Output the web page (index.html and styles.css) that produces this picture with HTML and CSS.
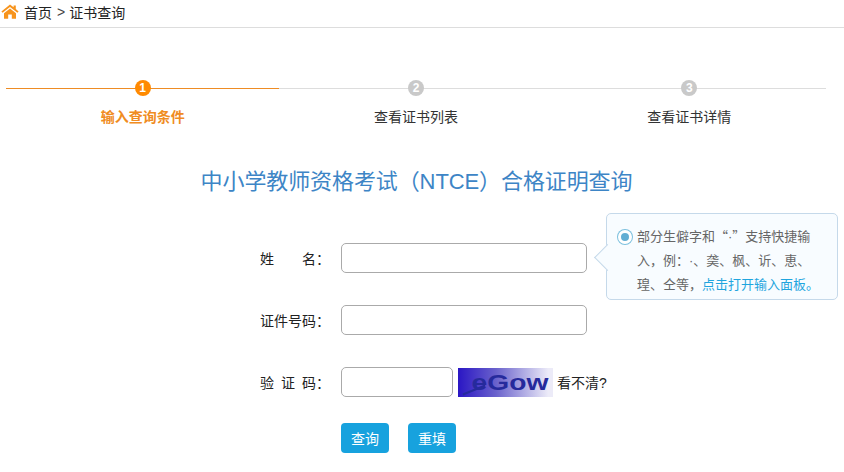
FILE: index.html
```html
<!DOCTYPE html>
<html lang="zh-CN">

<head>
  <meta charset="UTF-8">
  <title>证书查询</title>
  <link rel="stylesheet" href="styles.css">
</head>

<body>

  <div class="crumb">
    <svg class="home-icon" width="18" height="15" viewBox="0 0 18 15">
      <path fill="#f7941d" d="M9 0.4 L0.4 7.4 L1.6 8.8 L9 2.9 L16.4 8.8 L17.6 7.4 L14.8 5.1 L14.8 1.4 L12.6 1.4 L12.6 3.3 Z" />
      <path fill="#f7941d" d="M9 4.4 L3 9.2 L3 14.8 L7.2 14.8 L7.2 10.4 L10.8 10.4 L10.8 14.8 L15 14.8 L15 9.2 Z" />
    </svg>
    <span>首页</span>
    <span class="crumb-sep">&gt;</span>
    <span>证书查询</span>
  </div>

  <div class="steps">
    <div class="step active">
      <div class="step-num">1</div>
      <div class="step-name">输入查询条件</div>
    </div>
    <div class="step">
      <div class="step-num">2</div>
      <div class="step-name">查看证书列表</div>
    </div>
    <div class="step">
      <div class="step-num">3</div>
      <div class="step-name">查看证书详情</div>
    </div>
  </div>

  <h1 class="page-title">中小学教师资格考试（NTCE）合格证明查询</h1>

  <form class="query-form">
    <div class="form-row">
      <label class="form-label"><span>姓</span><span>名：</span></label>
      <input class="text-input" type="text">
      <div class="tip">
        <span class="tip-dot"></span>
        <p>部分生僻字和“<span class="mid-dot">·</span>”支持快捷输<br>入，例：<span class="mid-dot">·</span>、䶮、枫、䜣、恵、<br>瑝、仝等，<a href="#">点击打开输入面板。</a></p>
      </div>
    </div>
    <div class="form-row">
      <label class="form-label">证件号码：</label>
      <input class="text-input" type="text">
    </div>
    <div class="form-row">
      <label class="form-label"><span>验</span><span>证</span><span>码：</span></label>
      <input class="text-input short" type="text">
      <div class="captcha"><span>eGow</span></div>
      <a class="refresh" href="#">看不清?</a>
    </div>
    <div class="form-buttons">
      <button class="btn" type="button">查询</button>
      <button class="btn" type="button">重填</button>
    </div>
  </form>

</body>

</html>
```

FILE: styles.css
```css
body {
  margin: 0;
  background-color: #fff;
  color: #222;
  font-family: "Liberation Sans", "Noto Sans CJK SC", sans-serif;
  font-size: 14px;
}

.crumb {
  display: flex;
  align-items: center;
  gap: 5px;
  height: 23px;
  padding: 0 0 4px 1px;
  border-bottom: 1px solid #ddd;
  font-size: 14px;
}

.crumb-sep {
  margin-right: -1px;
  color: #444;
}

.steps {
  display: grid;
  grid-template-columns: repeat(3, 1fr);
  width: 820px;
  margin: 52px 0 0 6px;
}

.step {
  display: flex;
  flex-direction: column;
  align-items: center;
  background: linear-gradient(#ddd, #ddd) no-repeat 0 8px / 100% 1px;
}

.step-num {
  width: 16px;
  height: 16px;
  border-radius: 50%;
  background-color: #c9c9c9;
  color: #fff;
  font-size: 12px;
  font-weight: bold;
  line-height: 16px;
  text-align: center;
}

.step-name {
  margin-top: 11px;
  font-size: 14px;
  line-height: 20px;
  color: #333;
}

.step.active {
  background-image: linear-gradient(#ee8c24, #ee8c24);
}

.step.active .step-num {
  background-color: #ff8a00;
}

.step.active .step-name {
  color: #f08c22;
  font-weight: bold;
}

.page-title {
  margin: 39px 0 0;
  padding-right: 11px;
  color: #3d85c6;
  font-size: 22px;
  font-weight: normal;
  line-height: 32px;
  letter-spacing: -0.1px;
  text-align: center;
}

.query-form {
  margin: 45px 0 0 260px;
}

.form-row {
  position: relative;
  display: flex;
  align-items: center;
  height: 30px;
  margin-bottom: 32px;
}

.form-label {
  display: flex;
  justify-content: space-between;
  width: 70px;
  margin-right: 11px;
  font-size: 14px;
}

.text-input {
  width: 246px;
  height: 30px;
  box-sizing: border-box;
  border: 1px solid #aaa;
  border-radius: 5px;
  background-color: #fff;
}

.text-input.short {
  width: 112px;
}

.captcha {
  position: relative;
  display: flex;
  align-items: center;
  justify-content: center;
  width: 95px;
  height: 29px;
  margin-left: 5px;
  background: linear-gradient(90deg, #2a16c4, #6a62cc 40%, #ecebf8 95%);
  overflow: hidden;
}

.captcha::before {
  content: "";
  position: absolute;
  left: 4px;
  top: 21px;
  width: 24px;
  height: 2px;
  background-color: #262a9c;
  transform: rotate(-22deg);
}

.captcha span {
  margin-left: 8px;
  color: #262a9c;
  font-size: 22px;
  font-weight: bold;
  line-height: 29px;
  transform: scaleX(1.28);
}

.refresh {
  margin-left: 4px;
  color: #222;
  font-size: 14px;
  text-decoration: none;
}

.tip {
  position: absolute;
  left: 346px;
  top: -30px;
  width: 232px;
  height: 87px;
  box-sizing: border-box;
  padding: 10px 0 0 30px;
  border: 1px solid #c5d9ea;
  border-radius: 5px;
  background-color: #f8fcff;
  color: #666;
  font-family: "Noto Sans CJK SC", sans-serif;
  font-size: 13px;
  line-height: 24px;
  text-spacing-trim: space-all;
}

.tip::before {
  content: "";
  position: absolute;
  left: -9px;
  top: 34px;
  width: 18px;
  height: 18px;
  border-left: 1px solid #c5d9ea;
  border-bottom: 1px solid #c5d9ea;
  background-color: #f8fcff;
  transform: rotate(45deg);
}

.tip p {
  position: relative;
  margin: 0;
  white-space: nowrap;
}

.mid-dot {
  font-family: "Liberation Sans", sans-serif;
  line-height: 1;
}

.tip a {
  color: #1fa5de;
  text-decoration: none;
}

.tip-dot {
  position: absolute;
  left: 11px;
  top: 16px;
  width: 8px;
  height: 8px;
  border: 3px solid #fff;
  border-radius: 50%;
  background-color: #62aed3;
  box-shadow: 0 0 0 1px #7cc0de;
}

.form-buttons {
  display: flex;
  gap: 19px;
  margin: -6px 0 0 81px;
}

.btn {
  width: 48px;
  height: 30px;
  border: none;
  border-radius: 4px;
  background-color: #17a2de;
  color: #fff;
  font-family: inherit;
  font-size: 14px;
  padding: 0;
}
```
